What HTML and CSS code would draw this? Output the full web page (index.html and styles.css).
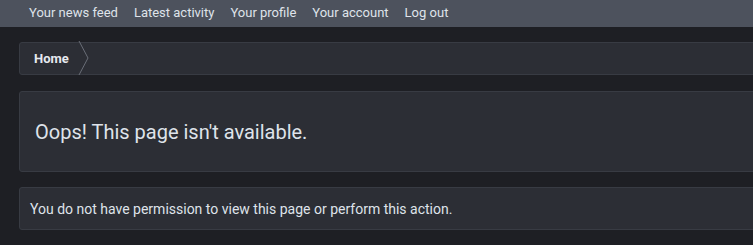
FILE: index.html
```html
<!DOCTYPE html>
<html>
<head>
<meta charset="utf-8">
<link rel="stylesheet" href="styles.css">
</head>
<body>
<nav class="topnav">
  <a class="navlink" href="#">Your news feed</a>
  <a class="navlink" href="#">Latest activity</a>
  <a class="navlink" href="#">Your profile</a>
  <a class="navlink" href="#">Your account</a>
  <a class="navlink" href="#">Log out</a>
</nav>
<main class="page">
  <div class="breadcrumb">
    <a class="crumb" href="#">Home</a>
    <svg class="chev" width="12" height="34" viewBox="0 0 12 34"><path d="M1 0 L10 17 L1 34" fill="none" stroke="#6a6e78" stroke-width="1"/></svg>
  </div>
  <div class="titlebox">
    <h1 class="title">Oops! This page isn't available.</h1>
  </div>
  <div class="msgbox">You do not have permission to view this page or perform this action.</div>
</main>
</body>
</html>
```
FILE: styles.css
```css
html, body { margin: 0; padding: 0; }
body {
  background: #1e1f24;
  font-family: Roboto, "Liberation Sans", sans-serif;
  overflow: hidden;
  width: 753px;
  height: 245px;
}
.topnav {
  height: 27px;
  background: #4d525d;
  display: flex;
  align-items: center;
  padding-left: 21px;
  gap: 0;
  box-sizing: border-box;
  padding-bottom: 3px;
}
.navlink {
  color: #dfe3ea;
  text-decoration: none;
  font-size: 13px;
  padding: 0 8px;
}
.page {
  padding: 15px 0 0 19px;
  margin-right: -20px;
  display: flex;
  flex-direction: column;
}
.breadcrumb {
  height: 33px;
  box-sizing: border-box;
  background: #2c2e35;
  border: 1px solid #383b43;
  border-radius: 3px;
  display: flex;
  align-items: center;
}
.crumb {
  color: #e6e9ef;
  font-weight: bold;
  font-size: 13px;
  text-decoration: none;
  padding: 0 9px 0 14px;
}
.chev { display: block; margin-top: -1px; }
.titlebox {
  margin-top: 16px;
  height: 81px;
  box-sizing: border-box;
  background: #2c2e35;
  border: 1px solid #383b43;
  border-radius: 3px;
  display: flex;
  align-items: center;
  padding-left: 15px;
}
.title {
  margin: 0;
  font-weight: normal;
  font-size: 20px;
  color: #dfe3ea;
}
.msgbox {
  margin-top: 15px;
  height: 43px;
  box-sizing: border-box;
  background: #2c2e35;
  border: 1px solid #383b43;
  border-radius: 3px;
  display: flex;
  align-items: center;
  padding-left: 10px;
  font-size: 14px;
  color: #dfe3ea;
}
```
